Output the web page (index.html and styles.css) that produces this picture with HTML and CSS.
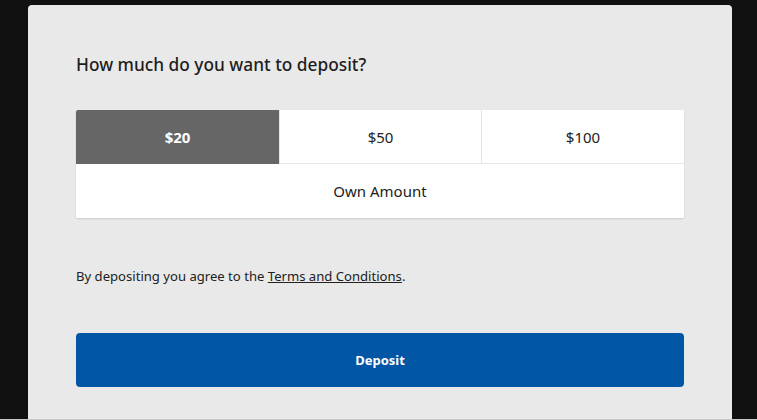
FILE: index.html
```html
<!DOCTYPE html>
<html lang="en">
<head>
<meta charset="utf-8">
<title>Deposit</title>
<link rel="stylesheet" href="styles.css">
</head>
<body>
<main class="card">
  <h1 class="title">How much do you want to deposit?</h1>
  <div class="amounts">
    <button class="amount selected">$20</button>
    <button class="amount">$50</button>
    <button class="amount">$100</button>
    <button class="amount own">Own Amount</button>
  </div>
  <p class="terms">By depositing you agree to the <a href="#" class="terms-link">Terms and Conditions</a>.</p>
  <button class="deposit">Deposit</button>
</main>
</body>
</html>
```
FILE: styles.css
```css
* { box-sizing: border-box; }
html, body { margin: 0; height: 100%; }
body {
  background: #111111;
  font-family: "Noto Sans", "Open Sans", sans-serif;
  color: #222;
  padding: 5px 0 0 28px;
  border-bottom: 1px solid #c9c9c9;
  overflow: hidden;
}
.card {
  width: 704px;
  height: 100%;
  background: #e9e9e9;
  border-radius: 4px 4px 0 0;
  padding: 48px 48px 0;
}
.title {
  margin: 0;
  font-size: 17.3px;
  line-height: 24px;
  font-weight: 500;
  color: #1e1e1e;
}
.amounts {
  margin-top: 33px;
  display: grid;
  grid-template-columns: 203px 202px 203px;
  grid-template-rows: 54px 54px;
  background: #fff;
  border-radius: 2px;
  box-shadow: 0 1px 2px rgba(0,0,0,0.12);
  overflow: hidden;
}
.amount {
  border: 0;
  margin: 0;
  background: #fff;
  font-family: inherit;
  font-size: 15px;
  color: #222;
  border-bottom: 1px solid #e6e6e6;
  border-left: 1px solid #e6e6e6;
  padding: 0;
}
.amount:first-child { border-left: 0; }
.amount.selected {
  background: #666666;
  color: #fff;
  font-weight: 700;
  border-bottom-color: #666;
}
.amount.own {
  grid-column: 1 / -1;
  border-left: 0;
  border-bottom: 0;
}
.terms {
  margin: 49px 0 0;
  font-size: 13.1px;
  line-height: 18px;
  color: #222;
}
.terms-link { color: #222; }
.deposit {
  margin-top: 48px;
  width: 100%;
  height: 54px;
  border: 0;
  border-radius: 4px;
  background: #0055a4;
  color: #fff;
  font-family: inherit;
  font-size: 13px;
  font-weight: 700;
}
```
